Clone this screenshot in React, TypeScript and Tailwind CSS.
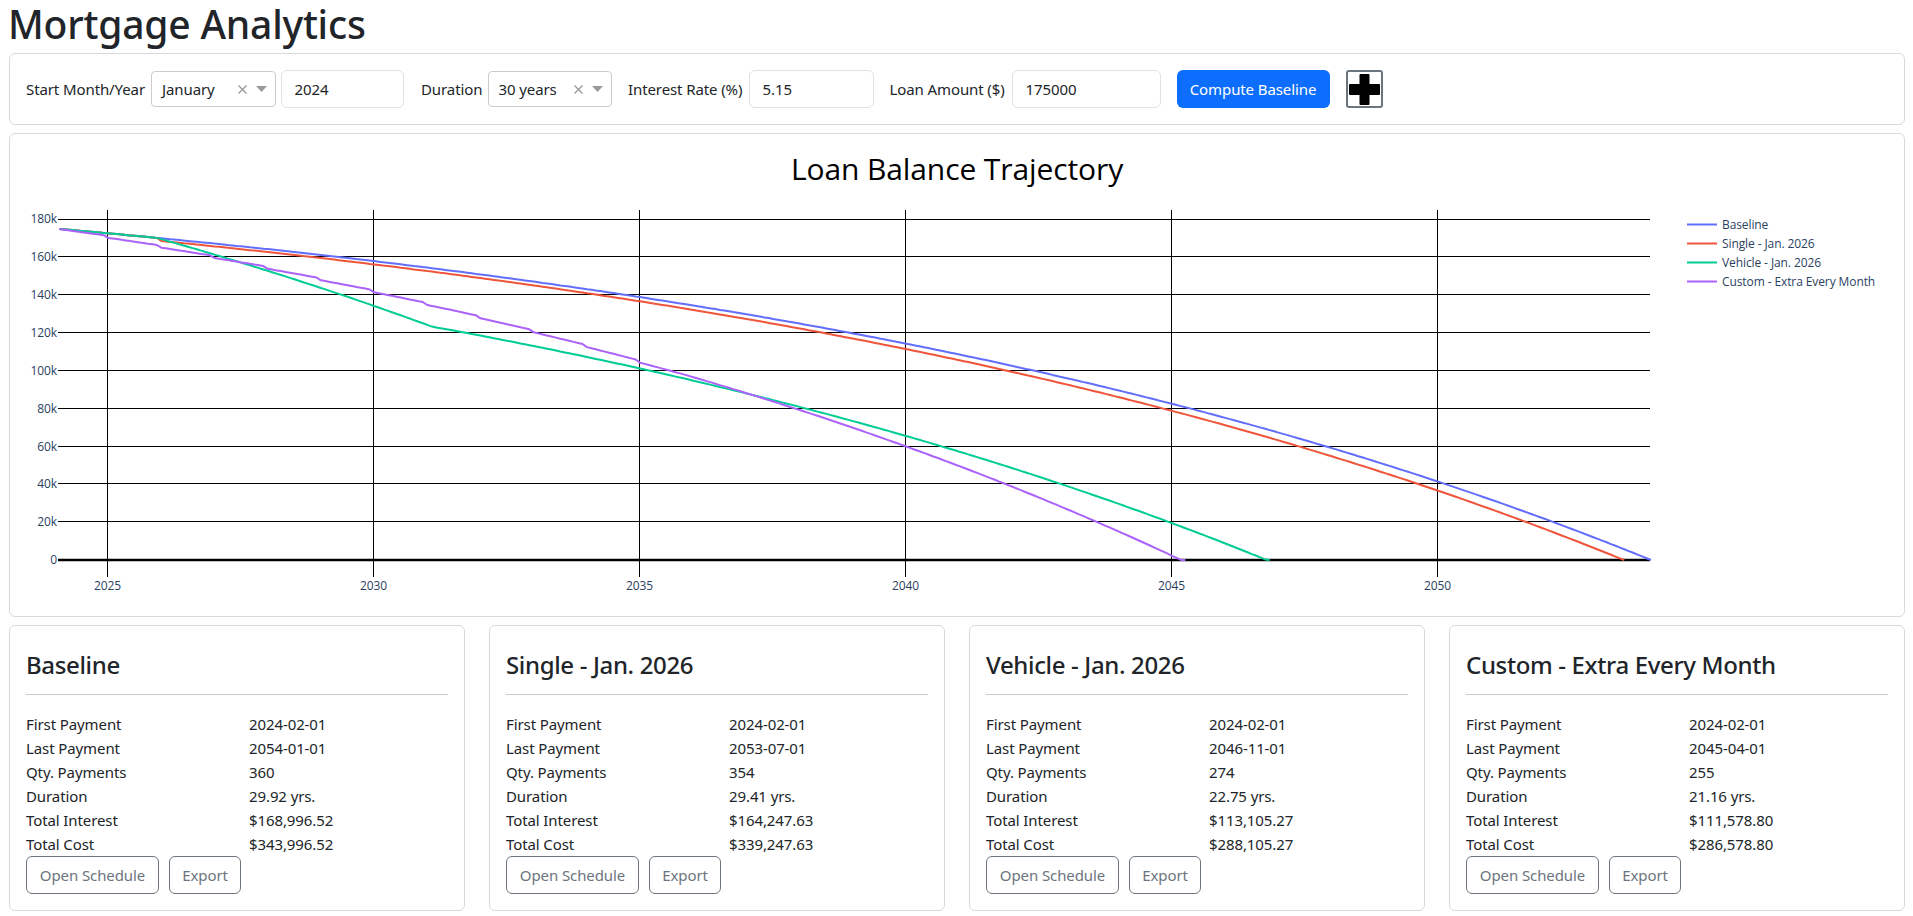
import React from "react";

const RATE = 0.0515 / 12;
const PAYMENT = 955.55;
const xOf = (year: number) => 107.6 + (year - 2025) * 53.2;
const yOf = (bal: number) => 560 - (bal / 1000) * 1.894;

function simulate(extra: (i: number) => number): string {
  let bal = 175000;
  const pts: string[] = [];
  for (let i = 0; i < 360 && bal > 0; i++) {
    const interest = bal * RATE;
    bal = Math.max(0, bal + interest - PAYMENT - extra(i));
    pts.push(`${xOf(2024 + (i + 1) / 12 + 0.01).toFixed(1)},${yOf(bal).toFixed(1)}`);
  }
  return pts.join(" ");
}

const series = [
  { name: "Baseline", color: "#636efa", pts: simulate(() => 0) },
  { name: "Single - Jan. 2026", color: "#ef553b", pts: simulate((i) => (i === 23 ? 1400 : 0)) },
  { name: "Vehicle - Jan. 2026", color: "#00cc96", pts: simulate((i) => (i >= 23 && i < 85 ? 435 : 0)) },
  {
    name: "Custom - Extra Every Month",
    color: "#ab63fa",
    pts: simulate((i) => (i < 143 ? 110 + ((i + 1) % 12 === 0 ? 1050 : 0) : 147)),
  },
];

const gridY = [
  [219, "180k"], [256.5, "160k"], [294.5, "140k"], [332.5, "120k"], [370.5, "100k"],
  [408.5, "80k"], [446.5, "60k"], [483.5, "40k"], [521.5, "20k"],
] as [number, string][];
const gridX = [
  [107.5, "2025"], [373.5, "2030"], [639.5, "2035"], [905.5, "2040"], [1171.5, "2045"], [1437.5, "2050"],
] as [number, string][];

function Chart() {
  return (
    <svg viewBox="26 150 1862 450" className="block w-full h-[450px] font-['Open_Sans']">
      <text x="957" y="180" textAnchor="middle" className="fill-black text-[30px]">Loan Balance Trajectory</text>
      {gridX.map(([x]) => (
        <line key={x} x1={x} x2={x} y1="210" y2="577" stroke="#000" strokeWidth="1" shapeRendering="crispEdges" />
      ))}
      {gridY.map(([y]) => (
        <line key={y} x1="58" x2="1650" y1={y} y2={y} stroke="#000" strokeWidth="1" shapeRendering="crispEdges" />
      ))}
      <line x1="58" x2="1650" y1="560" y2="560" stroke="#000" strokeWidth="2.5" />
      {series.map((s) => (
        <polyline key={s.name} points={s.pts} fill="none" stroke={s.color} strokeWidth="2" strokeLinejoin="round" />
      ))}
      {gridY.map(([y, t]) => (
        <text key={t} x="57" y={y + 4} textAnchor="end" className="fill-[#2a3f5f] text-[12px]">{t}</text>
      ))}
      <text x="57" y="564" textAnchor="end" className="fill-[#2a3f5f] text-[12px]">0</text>
      {gridX.map(([x, t]) => (
        <text key={t} x={x} y="590" textAnchor="middle" className="fill-[#2a3f5f] text-[12px]">{t}</text>
      ))}
      {series.map((s, i) => (
        <g key={s.name}>
          <line x1="1687" x2="1717" y1={224.5 + i * 19} y2={224.5 + i * 19} stroke={s.color} strokeWidth="2" />
          <text x="1722" y={229 + i * 19} className="fill-[#2a3f5f] text-[12px]">{s.name}</text>
        </g>
      ))}
    </svg>
  );
}

function Select({ value }: { value: string }) {
  return (
    <div className="flex items-center w-[124.5px] h-[36px] my-px rounded-[4px] border border-[#cccccc] bg-white pl-[10px] pr-[8px]">
      <span className="flex-1 whitespace-nowrap">{value}</span>
      <svg width="11" height="11" viewBox="0 0 11 11" className="mr-[8px]">
        <path d="M1.5 1.5 L9.5 9.5 M9.5 1.5 L1.5 9.5" stroke="#999999" strokeWidth="1.3" fill="none" />
      </svg>
      <svg width="11" height="6" viewBox="0 0 11 6">
        <path d="M0 0 H11 L5.5 6 Z" fill="#999999" />
      </svg>
    </div>
  );
}

function Field({ value, width }: { value: string; width: string }) {
  return (
    <div className={`flex items-center h-[38px] rounded-[6px] border border-[#dee2e6] bg-white px-[13px] ${width}`}>{value}</div>
  );
}

const cards = [
  { title: "Baseline", rows: ["2024-02-01", "2054-01-01", "360", "29.92 yrs.", "$168,996.52", "$343,996.52"] },
  { title: "Single - Jan. 2026", rows: ["2024-02-01", "2053-07-01", "354", "29.41 yrs.", "$164,247.63", "$339,247.63"] },
  { title: "Vehicle - Jan. 2026", rows: ["2024-02-01", "2046-11-01", "274", "22.75 yrs.", "$113,105.27", "$288,105.27"] },
  { title: "Custom - Extra Every Month", rows: ["2024-02-01", "2045-04-01", "255", "21.16 yrs.", "$111,578.80", "$286,578.80"] },
];
const labels = ["First Payment", "Last Payment", "Qty. Payments", "Duration", "Total Interest", "Total Cost"];

function SummaryCard({ title, rows }: { title: string; rows: string[] }) {
  return (
    <div className="rounded-[6px] border border-[#d9d9d9] bg-white p-[16px] h-[286px]">
      <h4 className="text-[24px] leading-[29px] font-medium mt-[8px] tracking-[-0.35px]">{title}</h4>
      <hr className="mt-[15px] mb-[17px] border-t border-[#c8c9ca]" />
      <div className="grid grid-cols-[223px_1fr] auto-rows-[24px] items-center">
        {labels.map((l, i) => (
          <React.Fragment key={l}>
            <div className="whitespace-nowrap">{l}</div>
            <div className="whitespace-nowrap">{rows[i]}</div>
          </React.Fragment>
        ))}
      </div>
      <div className="flex gap-[10px]">
        <button className="h-[38px] w-[133px] rounded-[6px] border border-[#6c757d] text-[#6c757d] bg-white">Open Schedule</button>
        <button className="h-[38px] w-[72px] rounded-[6px] border border-[#6c757d] text-[#6c757d] bg-white">Export</button>
      </div>
    </div>
  );
}

export default function App() {
  return (
    <div className="font-['Noto_Sans',sans-serif] text-[15px] text-[#212529] bg-white pl-[9px] pr-[8px] h-[916px] overflow-hidden tracking-[-0.1px]">
      <h1 className="text-[39px] leading-[48px] font-medium mb-[5px] -ml-px tracking-[-0.2px]">Mortgage Analytics</h1>
      <div className="flex items-center gap-[16px] h-[72px] rounded-[6px] border border-[#d9d9d9] px-[16px] mb-[8px]">
        <div className="flex items-center gap-[5px]">
          <span className="w-[120px] whitespace-nowrap">Start Month/Year</span>
          <Select value="January" />
          <Field value="2024" width="w-[123.5px]" />
        </div>
        <div className="flex items-center gap-[5px] ml-px">
          <span className="w-[61.5px] whitespace-nowrap">Duration</span>
          <Select value="30 years" />
        </div>
        <div className="flex items-center gap-[5px]">
          <span className="w-[115.5px] whitespace-nowrap">Interest Rate (%)</span>
          <Field value="5.15" width="w-[125px]" />
        </div>
        <div className="flex items-center gap-[5px]">
          <span className="w-[117px] whitespace-nowrap">Loan Amount ($)</span>
          <Field value="175000" width="w-[149px]" />
        </div>
        <button className="h-[38px] w-[153px] rounded-[6px] bg-[#0d6efd] text-white">Compute Baseline</button>
        <button aria-label="Add" className="flex items-center justify-center w-[37px] h-[38px] rounded-[3px] border-2 border-[#6c757d] bg-white">
          <svg width="31" height="31" viewBox="0 0 31 31">
            <path d="M10.5 1 Q10.5 0 11.5 0 H19.5 Q20.5 0 20.5 1 V10 H30 Q31 10 31 11 V20 Q31 21 30 21 H20.5 V30 Q20.5 31 19.5 31 H11.5 Q10.5 31 10.5 30 V21 H1 Q0 21 0 20 V11 Q0 10 1 10 H10.5 Z" fill="#000" />
          </svg>
        </button>
      </div>
      <div className="rounded-[6px] border border-[#d9d9d9] p-[16px] h-[484px] mb-[8px]">
        <Chart />
      </div>
      <div className="grid grid-cols-4 gap-[24px]">
        {cards.map((c) => (
          <SummaryCard key={c.title} title={c.title} rows={c.rows} />
        ))}
      </div>
    </div>
  );
}
